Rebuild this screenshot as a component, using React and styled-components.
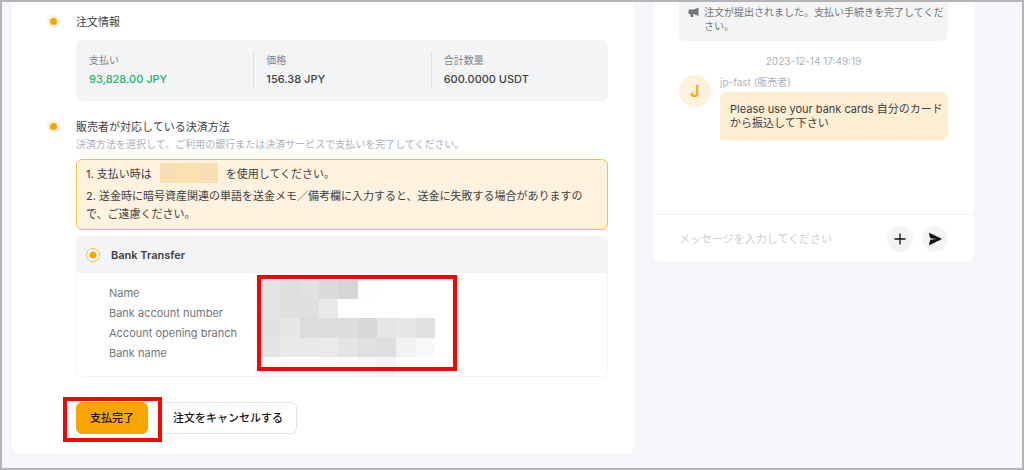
import React, { useState } from 'react';
import styled, { createGlobalStyle } from 'styled-components';

const GlobalStyle = createGlobalStyle`
  * {
    box-sizing: border-box;
  }
  body {
    margin: 0;
    font-family: Inter, "Noto Sans CJK JP", sans-serif;
    font-size: 11px;
    line-height: 16px;
    color: #3e4044;
  }
  h2, p, dl, dd {
    margin: 0;
    font-weight: 400;
  }
  button, input {
    font: inherit;
  }
`;

const Page = styled.div`
  display: grid;
  grid-template-columns: minmax(0, 1fr) 321px;
  gap: 19px;
  align-items: start;
  min-height: 100vh;
  padding: 0 48px 13px 10px;
  border: 2px solid #b5b5b5;
  background: #f5f6fb;
`;

const Panel = styled.main`
  display: flex;
  flex-direction: column;
  gap: 18px;
  padding: 12px 26px 20px 35px;
  border-radius: 0 0 8px 8px;
  background: white;
`;

const StepRow = styled.section`
  display: grid;
  grid-template-columns: 13px minmax(0, 1fr);
  gap: 16px;
`;

const Dot = styled.span`
  width: 13px;
  height: 13px;
  margin-top: 1px;
  border: 3px solid #fff0d8;
  border-radius: 50%;
  background: #f7a600;
`;

const StepTitle = styled.h2`
  font-size: 11px;
  line-height: 16px;
`;

const StepHint = styled.p`
  margin-top: 2px;
  font-size: 10px;
  line-height: 14px;
  color: #adb1b8;
`;

const Summary = styled.dl`
  display: grid;
  grid-template-columns: repeat(3, 1fr);
  margin-top: 10px;
  padding: 13px 0;
  border-radius: 6px;
  background: #f3f4f6;
`;

const SummaryItem = styled.div`
  padding-left: 12px;
  border-left: 1px solid #dcdee2;

  &:first-child {
    border-color: transparent;
  }
`;

const SummaryLabel = styled.dt`
  font-size: 10px;
  line-height: 14px;
  color: #81858c;
`;

const SummaryValue = styled.dd`
  margin-top: 3px;
  line-height: 18px;
  && {
    font-weight: 500;
  }
  color: ${(props) => (props.$up ? '#20b26c' : '#3e4044')};
`;

const Warning = styled.div`
  display: flex;
  flex-direction: column;
  gap: 4px;
  margin-top: 8px;
  padding: 3px 9px 6px;
  border: 1px solid #fabd43;
  border-radius: 6px;
  background: #fff2df;
  line-height: 18px;
`;

const WarningFirst = styled.p`
  display: flex;
  align-items: flex-end;
  gap: 8px;
`;

const MaskedName = styled.span`
  width: 58px;
  height: 20px;
  background: linear-gradient(90deg, #f9e0b4 0 33%, #fbe1ad 33% 67%, #f8deb3 67%);
`;

const Bank = styled.div`
  margin-top: 6px;
  border: 1px solid #f3f4f6;
  border-radius: 6px;
`;

const BankHeader = styled.label`
  display: flex;
  align-items: center;
  gap: 11px;
  height: 36px;
  padding: 0 9px;
  background: #f3f4f6;
  font-weight: 600;
`;

const Radio = styled.input`
  appearance: none;
  width: 14px;
  height: 14px;
  margin: 0;
  border: 1px solid #f9b53a;
  border-radius: 50%;
  background: white;

  &:checked {
    background: radial-gradient(circle, #f7a600 0 3px, white 4px);
  }
`;

const BankBody = styled.div`
  display: flex;
  align-items: flex-start;
  padding-top: 7px;
`;

const Fields = styled.dl`
  width: 184px;
  padding: 3px 0 0 32px;
  line-height: 20px;
  color: #71757a;
`;

const Highlighted = styled.div`
  position: relative;
`;

const Highlight = styled.span`
  position: absolute;
  z-index: 1;
  inset: ${(props) => props.$inset};
  border: 4px solid #ff0000;
  pointer-events: none;
`;

const MosaicSvg = styled.svg`
  display: block;
`;

const Actions = styled.div`
  display: flex;
  gap: 11px;
  margin-top: 25px;
`;

const Button = styled.button`
  height: 32px;
  padding: 0 13px;
  border: 1px solid ${(props) => (props.$primary ? '#f7a600' : '#e3e4e7')};
  border-radius: 6px;
  background: ${(props) => (props.$primary ? '#f7a600' : 'white')};
  color: #121214;
  font-weight: 500;
  cursor: pointer;
`;

const Chat = styled.aside`
  border-radius: 0 0 8px 8px;
  background: white;
`;

const Messages = styled.div`
  height: 212px;
  padding: 0 26px;
`;

const Notice = styled.div`
  display: flex;
  gap: 5px;
  padding: 3px 4px 8px 9px;
  border-radius: 0 0 6px 6px;
  background: #f3f4f6;
  font-size: 10px;
  line-height: 14px;
  color: #71757a;

  svg {
    flex: none;
    margin-top: 2px;
  }
`;

const Time = styled.p`
  margin-top: 13px;
  font-size: 10px;
  line-height: 14px;
  text-align: center;
  color: #adb1b8;
`;

const Message = styled.div`
  display: flex;
  gap: 9px;
  margin-top: 7px;
`;

const Avatar = styled.span`
  flex: none;
  width: 32px;
  height: 32px;
  border-radius: 50%;
  background: #fff1dc;
  color: #f7a600;
  font-size: 16px;
  font-weight: 600;
  line-height: 32px;
  text-align: center;
`;

const MessageBody = styled.div`
  flex: 1;
  min-width: 0;
`;

const Sender = styled.p`
  font-size: 10px;
  line-height: 14px;
  color: #adb1b8;
`;

const Bubble = styled.p`
  margin-top: 3px;
  padding: 10px 4px 10px 10px;
  border-radius: 6px 6px 6px 0;
  background: #feeed3;
  line-height: 14px;
`;

const Composer = styled.form`
  display: flex;
  align-items: center;
  gap: 9px;
  height: 48px;
  padding: 0 26px;
  border-top: 1px solid #f3f4f6;
`;

const MessageInput = styled.input`
  flex: 1;
  min-width: 0;
  padding: 0;
  border: none;
  outline: none;
  background: none;

  &::placeholder {
    color: #cdced1;
  }
`;

const RoundButton = styled.button`
  display: flex;
  align-items: center;
  justify-content: center;
  width: 26px;
  height: 26px;
  padding: 0;
  border: none;
  border-radius: 50%;
  background: #f3f4f6;
  color: #121214;
  cursor: pointer;
`;

const summary = [
  { label: '支払い', value: '93,828.00 JPY', up: true },
  { label: '価格', value: '156.38 JPY' },
  { label: '合計数量', value: '600.0000 USDT' },
];

const fields = ['Name', 'Bank account number', 'Account opening branch', 'Bank name'];

// one grey per masked block, row by row
const blocks = [
  ['#e3e3e3', '#dedede', '#e1e1e1', '#dadada', '#d6d6d6', '#fdfdfd'],
  ['#e4e4e4', '#dfdfdf', '#dfdfdf', '#e9e9e9'],
  ['#e2e2e2', '#e6e6e6', '#dcdcdc', '#dcdcdc', '#dddddd', '#d7d7d7', '#e5e5e5', '#e7e7e7', '#e0e0e0'],
  ['#e4e4e4', '#e8e8e8', '#e8e8e8', '#eaeaea', '#e4e4e4', '#e0e0e0', '#dedede', '#f2f2f2', '#f8f8f8'],
  ['#fbfbfb', '#fafafa', '#fafafa', '#fbfbfb', '#fafafa', '#f8f8f8', '#f4f4f4', '#fdfdfd', '#fdfdfd'],
];

const Mosaic = () => (
  <MosaicSvg width="174" height="96" viewBox="0 0 9 5" preserveAspectRatio="none" shapeRendering="crispEdges" aria-hidden="true">
    {blocks.map((row, y) =>
      row.map((fill, x) => <rect key={`${x}-${y}`} x={x} y={y} width="1" height="1" fill={fill} />)
    )}
  </MosaicSvg>
);

const MegaphoneIcon = () => (
  <svg width="11" height="11" viewBox="0 0 22 22" fill="#71757a" aria-hidden="true">
    <path d="M21 1v17l-9-4V5z" />
    <path d="M3 5h10v9H3q-2 0-2-2V7q0-2 2-2z" />
    <path d="M4 13h6l1 7H6z" />
  </svg>
);

const PlusIcon = () => (
  <svg width="12" height="12" viewBox="0 0 12 12" stroke="currentColor" strokeWidth="1.3" aria-hidden="true">
    <path d="M6 .5v11M.5 6h11" />
  </svg>
);

const SendIcon = () => (
  <svg width="14" height="14" viewBox="0 0 14 14" fill="currentColor" aria-hidden="true">
    <path d="M1.6.9 13.2 6.6q.6.4 0 .8L1.6 13.1q-.8.3-.6-.5L2.2 7.8 8.6 7 2.2 6.2 1 1.4Q.8.6 1.6.9z" />
  </svg>
);

const Step = ({ title, children }) => (
  <StepRow>
    <Dot />
    <div>
      <StepTitle>{title}</StepTitle>
      {children}
    </div>
  </StepRow>
);

const App = () => {
  const [text, setText] = useState('');

  return (
    <>
      <GlobalStyle />
      <Page>
        <Panel>
          <Step title="注文情報">
            <Summary>
              {summary.map((item) => (
                <SummaryItem key={item.label}>
                  <SummaryLabel>{item.label}</SummaryLabel>
                  <SummaryValue $up={item.up}>{item.value}</SummaryValue>
                </SummaryItem>
              ))}
            </Summary>
          </Step>
          <Step title="販売者が対応している決済方法">
            <StepHint>決済方法を選択して、ご利用の銀行または決済サービスで支払いを完了してください。</StepHint>
            <Warning>
              <WarningFirst>
                <span>1. 支払い時は</span>
                <MaskedName />
                <span>を使用してください。</span>
              </WarningFirst>
              <p>2. 送金時に暗号資産関連の単語を送金メモ／備考欄に入力すると、送金に失敗する場合がありますので、ご遠慮ください。</p>
            </Warning>
            <Bank>
              <BankHeader>
                <Radio type="radio" name="method" defaultChecked />
                Bank Transfer
              </BankHeader>
              <BankBody>
                <Fields>
                  {fields.map((field) => (
                    <dt key={field}>{field}</dt>
                  ))}
                </Fields>
                <Highlighted>
                  <Mosaic />
                  <Highlight $inset="-5px -22px 5px -4px" />
                </Highlighted>
              </BankBody>
            </Bank>
            <Actions>
              <Highlighted>
                <Button $primary>支払完了</Button>
                <Highlight $inset="-5px -14px -8px -13px" />
              </Highlighted>
              <Button>注文をキャンセルする</Button>
            </Actions>
          </Step>
        </Panel>
        <Chat>
          <Messages>
            <Notice>
              <MegaphoneIcon />
              <p>注文が提出されました。支払い手続きを完了してください。</p>
            </Notice>
            <Time>2023-12-14 17:49:19</Time>
            <Message>
              <Avatar>J</Avatar>
              <MessageBody>
                <Sender>jp-fast (販売者)</Sender>
                <Bubble>Please use your bank cards 自分のカードから振込して下さい</Bubble>
              </MessageBody>
            </Message>
          </Messages>
          <Composer onSubmit={(e) => e.preventDefault()}>
            <MessageInput
              aria-label="メッセージ"
              placeholder="メッセージを入力してください"
              value={text}
              onChange={(e) => setText(e.target.value)}
            />
            <RoundButton type="button" aria-label="添付">
              <PlusIcon />
            </RoundButton>
            <RoundButton type="submit" aria-label="送信">
              <SendIcon />
            </RoundButton>
          </Composer>
        </Chat>
      </Page>
    </>
  );
};

export default App;
